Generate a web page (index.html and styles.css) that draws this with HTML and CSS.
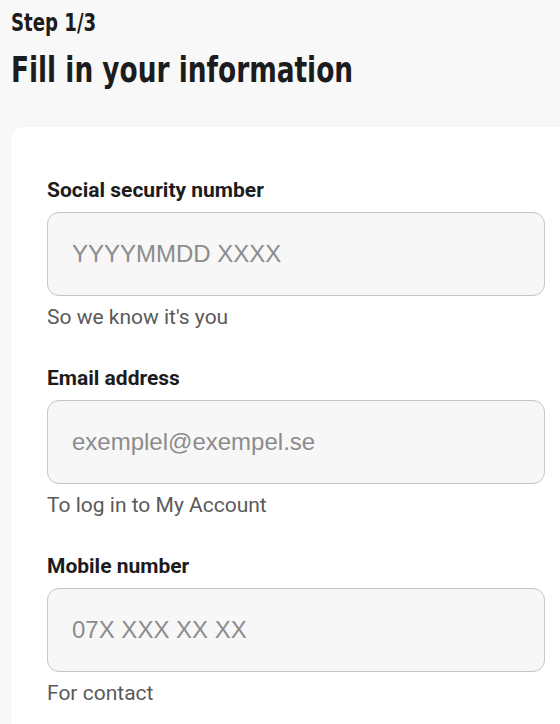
FILE: index.html
```html
<!DOCTYPE html>
<html lang="en">
<head>
<meta charset="utf-8">
<title>Fill in your information</title>
<link rel="stylesheet" href="styles.css">
</head>
<body>
<main class="page">
  <header class="intro">
    <p class="step">Step 1/3</p>
    <h1 class="title">Fill in your information</h1>
  </header>
  <form class="card">
    <div class="field">
      <label class="label" for="ssn">Social security number</label>
      <input class="input" id="ssn" type="text" placeholder="YYYYMMDD XXXX">
      <p class="help">So we know it's you</p>
    </div>
    <div class="field">
      <label class="label" for="email">Email address</label>
      <input class="input" id="email" type="email" placeholder="exemplel@exempel.se">
      <p class="help">To log in to My Account</p>
    </div>
    <div class="field">
      <label class="label" for="mobile">Mobile number</label>
      <input class="input" id="mobile" type="tel" placeholder="07X XXX XX XX">
      <p class="help">For contact</p>
    </div>
  </form>
</main>
</body>
</html>
```
FILE: styles.css
```css
* { box-sizing: border-box; }
html, body { margin: 0; padding: 0; }
body {
  background: #f8f8f8;
  font-family: Roboto, "Liberation Sans", sans-serif;
  color: #1c1c1c;
  overflow: hidden;
  height: 724px;
}
.page {
  padding: 8px 0 0 11px;
  width: 600px;
}
.intro { margin: 0; }
.step {
  margin: 0;
  font-family: "DejaVu Sans Condensed", "DejaVu Sans", sans-serif;
  font-weight: 700;
  font-size: 24px;
  line-height: 30px;
  color: #1c1c1c;
  transform: scaleX(0.84);
  transform-origin: left center;
}
.title {
  margin: 10px 0 0;
  font-family: "DejaVu Sans Condensed", "DejaVu Sans", sans-serif;
  font-weight: 700;
  font-size: 36px;
  line-height: 44px;
  color: #1c1c1c;
  transform: scaleX(0.815);
  transform-origin: left center;
}
.card {
  margin-top: 35px;
  background: #fff;
  border-radius: 12px;
  box-shadow: 0 0 2px rgba(0, 0, 0, 0.06);
  padding: 51px 0 30px 36px;
  width: 589px;
}
.field {
  display: flex;
  flex-direction: column;
  width: 498px;
  margin-bottom: 37px;
}
.label {
  font-weight: 700;
  font-size: 21px;
  line-height: 24px;
  color: #1c1c1c;
}
.input {
  margin-top: 10px;
  height: 84px;
  width: 498px;
  border: 1px solid #c6c6c6;
  border-radius: 12px;
  background: #f7f7f7;
  padding: 0 24px;
  font-family: "Liberation Sans", Arial, sans-serif;
  font-size: 24px;
  color: #1c1c1c;
  outline: none;
}
.input::placeholder { color: #8c8c8c; }
.help {
  margin: 9px 0 0;
  font-size: 21px;
  line-height: 24px;
  color: #5a5a5a;
}
```
